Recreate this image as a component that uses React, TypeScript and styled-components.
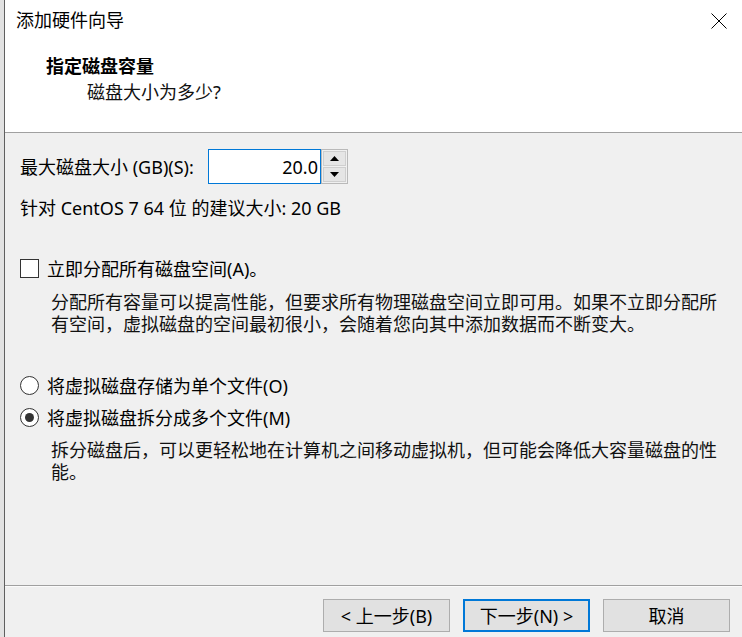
import React from 'react';
import styled, { createGlobalStyle } from 'styled-components';

const Global = createGlobalStyle`
  html, body { margin: 0; padding: 0; }
  body {
    font-family: "Noto Sans", "Noto Sans CJK SC", sans-serif;
    background: #e4e4e4;
  }
  * { box-sizing: border-box; }
`;

const Screen = styled.div`
  display: flex;
  width: 742px;
  height: 637px;
  overflow: hidden;
`;

const EdgeStrip = styled.div`
  width: 4px;
  flex: none;
  background: #e2e2e2;
`;

const Dialog = styled.div`
  flex: 1;
  display: flex;
  flex-direction: column;
  border-left: 1px solid #5f5f5f;
  background: #f0f0f0;
  color: #000;
  font-size: 18px;
`;

const Header = styled.div`
  height: 133px;
  background: #fff;
  border-bottom: 1px solid #a0a0a0;
  display: flex;
  flex-direction: column;
`;

const TitleBar = styled.div`
  height: 40px;
  display: flex;
  align-items: center;
  justify-content: space-between;
  padding: 0 16px 0 11px;
`;

const Title = styled.div`
  font-size: 18px;
  line-height: 24px;
`;

const CloseButton = styled.div`
  width: 16px;
  height: 16px;
  display: flex;
  margin-top: 1px;
`;

const Heading = styled.div`
  margin: 13px 0 0 41px;
  font-weight: 700;
  line-height: 26px;
`;

const SubHeading = styled.div`
  margin-left: 82px;
  line-height: 26px;
  color: #111;
`;

const Body = styled.div`
  display: flex;
  flex-direction: column;
  padding: 16px 20px 0 15px;
`;

const SizeRow = styled.div`
  display: flex;
  align-items: center;
  height: 35px;
`;

const SizeLabel = styled.div`
  width: 188px;
  flex: none;
  line-height: 22px;
`;

const SpinBox = styled.div`
  display: flex;
  height: 35px;
`;

const SpinInput = styled.div`
  width: 113px;
  height: 35px;
  border: 1px solid #0078d7;
  background: #fff;
  display: flex;
  align-items: center;
  justify-content: flex-end;
  padding-right: 2px;
`;

const Spinner = styled.div`
  width: 27px;
  height: 35px;
  border: 1px solid #b9b9b9;
  background: #f0f0f0;
  display: flex;
  flex-direction: column;
  gap: 1px;
  padding: 1px;
`;

const SpinButton = styled.div`
  flex: 1;
  background: #e5e5e5;
  border: 1px solid #cfcfcf;
  display: flex;
  align-items: center;
  justify-content: center;
`;

const TextLine = styled.div<{ $top: number }>`
  margin-top: ${p => p.$top}px;
  line-height: 22px;
`;

const OptionRow = styled.label<{ $top: number }>`
  margin-top: ${p => p.$top}px;
  height: 24px;
  display: flex;
  align-items: center;
  gap: 8px;
`;

const CheckBox = styled.span`
  width: 19px;
  height: 19px;
  flex: none;
  border: 1px solid #333;
  background: #fff;
`;

const Radio = styled.span<{ $checked?: boolean }>`
  width: 19px;
  height: 19px;
  flex: none;
  border-radius: 50%;
  border: 1px solid #333;
  background: #fff;
  display: flex;
  align-items: center;
  justify-content: center;
  &::after {
    content: '';
    display: ${p => (p.$checked ? 'block' : 'none')};
    width: 9px;
    height: 9px;
    border-radius: 50%;
    background: #333;
  }
`;

const Description = styled.div<{ $top: number }>`
  margin: ${p => p.$top}px 0 0 31px;
  width: 672px;
  line-height: 22px;
  color: #111;
`;

const Footer = styled.div`
  margin-top: auto;
  border-top: 1px solid #a0a0a0;
  box-shadow: inset 0 1px 0 #fbfbfb;
  display: flex;
  justify-content: flex-end;
  gap: 13px;
  padding: 13px 13px 5px 0;
`;

const Button = styled.button<{ $primary?: boolean }>`
  width: 127px;
  height: 33px;
  background: #e1e1e1;
  border: ${p => (p.$primary ? '2px solid #0078d7' : '1px solid #adadad')};
  font: inherit;
  font-size: 18px;
  line-height: 22px;
  color: #000;
  padding: 0;
  display: flex;
  align-items: center;
  justify-content: center;
`;

const Arrow = ({ up }: { up?: boolean }) => (
  <svg width="9" height="5" viewBox="0 0 9 5">
    <polygon points={up ? '0,5 9,5 4.5,0' : '0,0 9,0 4.5,5'} fill="#000" />
  </svg>
);

export default function App() {
  return (
    <>
      <Global />
      <Screen>
        <EdgeStrip />
        <Dialog>
          <Header>
            <TitleBar>
              <Title>添加硬件向导</Title>
              <CloseButton>
                <svg width="16" height="16" viewBox="0 0 16 16">
                  <line x1="0.5" y1="0.5" x2="15.5" y2="15.5" stroke="#000" strokeWidth="1" />
                  <line x1="15.5" y1="0.5" x2="0.5" y2="15.5" stroke="#000" strokeWidth="1" />
                </svg>
              </CloseButton>
            </TitleBar>
            <Heading>指定磁盘容量</Heading>
            <SubHeading>磁盘大小为多少?</SubHeading>
          </Header>
          <Body>
            <SizeRow>
              <SizeLabel>最大磁盘大小 (GB)(S):</SizeLabel>
              <SpinBox>
                <SpinInput>20.0</SpinInput>
                <Spinner>
                  <SpinButton><Arrow up /></SpinButton>
                  <SpinButton><Arrow /></SpinButton>
                </Spinner>
              </SpinBox>
            </SizeRow>
            <TextLine $top={13}>针对 CentOS 7 64 位 的建议大小: 20 GB</TextLine>
            <OptionRow $top={37}>
              <CheckBox />
              <span>立即分配所有磁盘空间(A)。</span>
            </OptionRow>
            <Description $top={11}>
              分配所有容量可以提高性能，但要求所有物理磁盘空间立即可用。如果不立即分配所有空间，虚拟磁盘的空间最初很小，会随着您向其中添加数据而不断变大。
            </Description>
            <OptionRow $top={38}>
              <Radio />
              <span>将虚拟磁盘存储为单个文件(O)</span>
            </OptionRow>
            <OptionRow $top={8}>
              <Radio $checked />
              <span>将虚拟磁盘拆分成多个文件(M)</span>
            </OptionRow>
            <Description $top={10}>
              拆分磁盘后，可以更轻松地在计算机之间移动虚拟机，但可能会降低大容量磁盘的性能。
            </Description>
          </Body>
          <Footer>
            <Button>&lt; 上一步(B)</Button>
            <Button $primary>下一步(N) &gt;</Button>
            <Button>取消</Button>
          </Footer>
        </Dialog>
      </Screen>
    </>
  );
}
